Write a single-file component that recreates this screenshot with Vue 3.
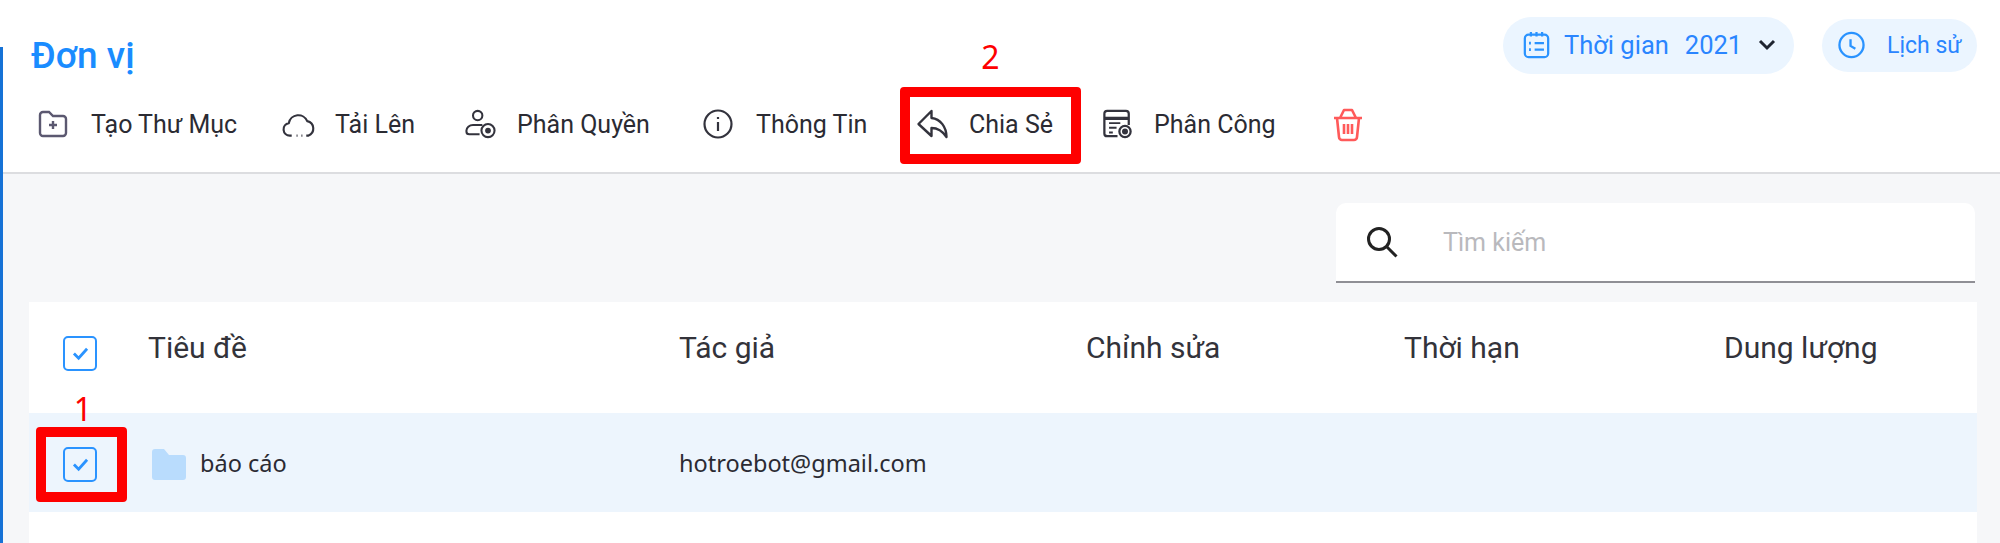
<script setup>
const actions = [
  { key: 'folder', label: 'Tạo Thư Mục', width: 244 },
  { key: 'cloud', label: 'Tải Lên', width: 182 },
  { key: 'perm', label: 'Phân Quyền', width: 239 },
  { key: 'info', label: 'Thông Tin', width: 213 },
  { key: 'share', label: 'Chia Sẻ', width: 185 },
  { key: 'assign', label: 'Phân Công', width: 232 },
  { key: 'trash', label: '', width: 40 }
]
const columns = [
  { label: 'Tiêu đề', width: 531 },
  { label: 'Tác giả', width: 407 },
  { label: 'Chỉnh sửa', width: 318 },
  { label: 'Thời hạn', width: 320 },
  { label: 'Dung lượng', width: 200 }
]
</script>

<template>
  <div class="page">
    <header class="top">
      <div class="top-left">
        <h1 class="title">Đơn vị</h1>
        <nav class="actions">
          <div v-for="a in actions" :key="a.key" class="action" :style="{ width: a.width + 'px' }">
            <svg v-if="a.key === 'folder'" class="icon" viewBox="0 0 30 30" fill="none" stroke="#5b5870" stroke-width="2.4">
              <path d="M2 6a3 3 0 0 1 3-3h6l4 4h10a3 3 0 0 1 3 3v14a3 3 0 0 1-3 3H5a3 3 0 0 1-3-3z" />
              <path d="M15 12v8M11 16h8" />
            </svg>
            <svg v-else-if="a.key === 'cloud'" class="icon wide" viewBox="0 0 34 30" fill="none" stroke="#33333d" stroke-width="2.2">
              <path d="M10 27H8a6.5 6.5 0 0 1-1-12.900A10 10 0 0 1 26 12a7.800 7.800 0 0 1 1 15h-2" />
              <path d="M15 27h1M20 27h1" />
            </svg>
            <svg v-else-if="a.key === 'perm'" class="icon wide" viewBox="0 0 34 32" fill="none" stroke="#33333d" stroke-width="2.2">
              <circle cx="14" cy="7" r="5" />
              <path d="M16 27H5a3 3 0 0 1-3-3v-1c0-3 3-6 7-6h10" />
              <circle cx="25" cy="23" r="7" />
              <circle cx="25" cy="23" r="2" fill="#33333d" />
            </svg>
            <svg v-else-if="a.key === 'info'" class="icon" viewBox="0 0 30 30" fill="none" stroke="#33333d" stroke-width="2.2">
              <circle cx="15" cy="15" r="13.5" />
              <path d="M15 13v9M15 8v2" />
            </svg>
            <svg v-else-if="a.key === 'share'" class="icon wide" viewBox="0 0 32 30" fill="none" stroke="#33333d" stroke-width="2.4" stroke-linejoin="round">
              <path d="M15 2 2 15l13 12v-8c6 0 11 3 15 9 0-10-6-18-15-19z" />
            </svg>
            <svg v-else-if="a.key === 'assign'" class="icon wide" viewBox="0 0 32 32" fill="none" stroke="#33333d" stroke-width="2.4">
              <path d="M16 29H5a3 3 0 0 1-3-3V5a3 3 0 0 1 3-3h20a3 3 0 0 1 3 3v12" />
              <path d="M2 10h26" stroke-width="3.5" />
              <path d="M7 15h12M7 20h8M7 25h4" stroke-width="2" />
              <circle cx="24" cy="24" r="6" fill="#fff" />
              <circle cx="24" cy="24" r="2" fill="#33333d" />
            </svg>
            <svg v-else class="icon trash" viewBox="0 0 30 35" fill="none" stroke="#ff5a5a" stroke-width="2.6" stroke-linejoin="round">
              <path d="M1 11h28M7 11l4-8h8l4 8" />
              <path d="M4 11l2 19a3 3 0 0 0 3 3h12a3 3 0 0 0 3-3l2-19" />
              <path d="M11 17v10M15 17v10M19 17v10" />
            </svg>
            <span v-if="a.label" class="action-label">{{ a.label }}</span>
          </div>
        </nav>
      </div>
      <div class="top-right">
        <div class="pill time">
          <svg class="pill-icon" viewBox="0 0 28 30" fill="none" stroke="#2a93ff" stroke-width="2.4">
            <rect x="1.5" y="4" width="25" height="24" rx="4" />
            <path d="M8 1v5M14 1v5M20 1v5M12 13h10M12 20h10" />
            <path d="M6 13h2M6 20h2" stroke-width="3" />
          </svg>
          <span class="time-text">Thời gian</span>
          <span class="year">2021</span>
          <svg class="chevron" viewBox="0 0 18 12" fill="none" stroke="#1f2430" stroke-width="3">
            <path d="M2 2l7 7 7-7" />
          </svg>
        </div>
        <div class="pill history">
          <svg class="pill-icon" viewBox="0 0 28 28" fill="none" stroke="#2a93ff" stroke-width="2.4">
            <circle cx="14" cy="14" r="12.5" />
            <path d="M13 8v7l5 3" />
          </svg>
          <span class="history-text">Lịch sử</span>
        </div>
      </div>
    </header>

    <main class="body">
      <div class="search-row">
        <div class="search">
          <svg class="search-icon" viewBox="0 0 32 32" fill="none" stroke="#222" stroke-width="3">
            <circle cx="13" cy="13" r="10.5" />
            <path d="M20.500 20.500l10 10" />
          </svg>
          <span class="placeholder">Tìm kiếm</span>
        </div>
      </div>

      <section class="table">
        <div class="row head">
          <div class="check-cell">
            <span class="check"><svg viewBox="0 0 20 16" fill="none" stroke="#2a93ff" stroke-width="3"><path d="M3 8l5 5 9-10" /></svg></span>
          </div>
          <div v-for="c in columns" :key="c.label" class="head-cell" :style="{ width: c.width + 'px' }">{{ c.label }}</div>
        </div>
        <div class="row item">
          <div class="check-cell">
            <span class="check"><svg viewBox="0 0 20 16" fill="none" stroke="#2a93ff" stroke-width="3"><path d="M3 8l5 5 9-10" /></svg></span>
            <span class="mark mark-one">
              <span class="num">1</span>
            </span>
          </div>
          <div class="name-cell">
            <svg class="folder" viewBox="0 0 34 31" fill="#b9dcfd"><path d="M0 3a3 3 0 0 1 3-3h9l5 6h14a3 3 0 0 1 3 3v19a3 3 0 0 1-3 3H3a3 3 0 0 1-3-3z" /></svg>
            <span>báo cáo</span>
          </div>
          <div class="author-cell">hotroebot@gmail.com</div>
        </div>
      </section>
    </main>

    <div class="mark mark-two">
      <span class="num">2</span>
    </div>
  </div>
</template>

<style scoped>
.page {
  position: relative;
  width: 2000px;
  height: 543px;
  overflow: hidden;
  background: #f6f7f9;
  font-family: Roboto, "Noto Sans", sans-serif;
  color: #2b2b33;
}
.page::before {
  content: '';
  position: absolute;
  left: 0;
  top: 47px;
  bottom: 0;
  width: 3px;
  background: #1672d6;
}
.top {
  height: 174px;
  box-sizing: border-box;
  background: #fff;
  border-bottom: 2px solid #dcdde0;
  display: flex;
  justify-content: space-between;
}
.top-left {
  padding: 37px 0 0 31px;
}
.title {
  margin: 0;
  font-size: 37px;
  line-height: 38px;
  font-weight: 500;
  color: #1a8cff;
}
.actions {
  display: flex;
  align-items: center;
  margin: 27px 0 0 7px;
}
.action {
  display: flex;
  align-items: center;
  height: 44px;
  flex: none;
}
.icon {
  width: 30px;
  height: 30px;
  margin-right: 23px;
  flex: none;
}
.icon.wide {
  width: 33px;
  margin-right: 20px;
}
.icon.trash {
  height: 35px;
  margin-right: 0;
}
.action-label {
  font-size: 25px;
  white-space: nowrap;
}
.top-right {
  display: flex;
  align-items: center;
  gap: 28px;
  height: 90px;
  padding-right: 23px;
}
.pill {
  display: flex;
  align-items: center;
  background: #ebf5ff;
  color: #2a85ff;
}
.time {
  width: 291px;
  height: 57px;
  border-radius: 29px;
  padding-left: 20px;
  box-sizing: border-box;
  font-size: 25.5px;
}
.history {
  width: 155px;
  height: 53px;
  border-radius: 27px;
  padding-left: 16px;
  box-sizing: border-box;
  font-size: 23px;
}
.pill-icon {
  width: 27px;
  height: 28px;
  flex: none;
}
.time-text {
  margin-left: 14px;
}
.year {
  margin-left: 16px;
}
.chevron {
  width: 18px;
  height: 12px;
  margin-left: 16px;
}
.history-text {
  margin-left: 22px;
}
.body {
  padding: 29px 23px 0 29px;
}
.search-row {
  display: flex;
  justify-content: flex-end;
  padding-right: 2px;
}
.search {
  width: 639px;
  height: 80px;
  box-sizing: border-box;
  display: flex;
  align-items: center;
  padding-left: 30px;
  background: #fff;
  border-radius: 10px 10px 0 0;
  border-bottom: 2px solid #8f8f95;
}
.search-icon {
  width: 32px;
  height: 32px;
}
.placeholder {
  margin-left: 45px;
  font-size: 25px;
  color: #b9b9bd;
}
.table {
  margin-top: 19px;
  height: 241px;
  background: #fff;
}
.row {
  display: flex;
  align-items: center;
}
.head {
  height: 111px;
}
.item {
  height: 99px;
  background: #edf5fd;
}
.check-cell {
  position: relative;
  width: 119px;
  padding-left: 34px;
  box-sizing: border-box;
  flex: none;
  display: flex;
}
.head .check-cell {
  margin-bottom: 9px;
}
.item .check-cell {
  margin-top: 4px;
}
.check {
  width: 30px;
  height: 31px;
  border: 2px solid #2a93ff;
  border-radius: 5px;
  display: flex;
  align-items: center;
  justify-content: center;
}
.check svg {
  width: 19px;
  height: 15px;
}
.head-cell {
  flex: none;
  margin-bottom: 20px;
  font-size: 30px;
  white-space: nowrap;
  color: #33333a;
}
.name-cell {
  width: 531px;
  flex: none;
  display: flex;
  align-items: center;
  padding-left: 4px;
  box-sizing: border-box;
  font-family: "Noto Sans", sans-serif;
  font-size: 23.5px;
}
.folder {
  width: 34px;
  height: 31px;
  margin: 4px 14px 0 0;
}
.author-cell {
  font-family: "Noto Sans", sans-serif;
  font-size: 23.5px;
}
.mark {
  position: absolute;
  box-sizing: border-box;
  border: 10px solid #fe0000;
  border-radius: 4px;
}
.mark-one {
  left: 7px;
  top: -20px;
  width: 91px;
  height: 75px;
}
.mark-two {
  left: 900px;
  top: 87px;
  width: 181px;
  height: 77px;
}
.num {
  position: absolute;
  left: 0;
  right: 0;
  text-align: center;
  color: #fe0000;
  font-family: "Noto Sans", sans-serif;
  font-size: 32px;
  line-height: 36px;
}
.mark-one .num {
  top: -46px;
  left: 3px;
}
.mark-two .num {
  top: -58px;
}
</style>
